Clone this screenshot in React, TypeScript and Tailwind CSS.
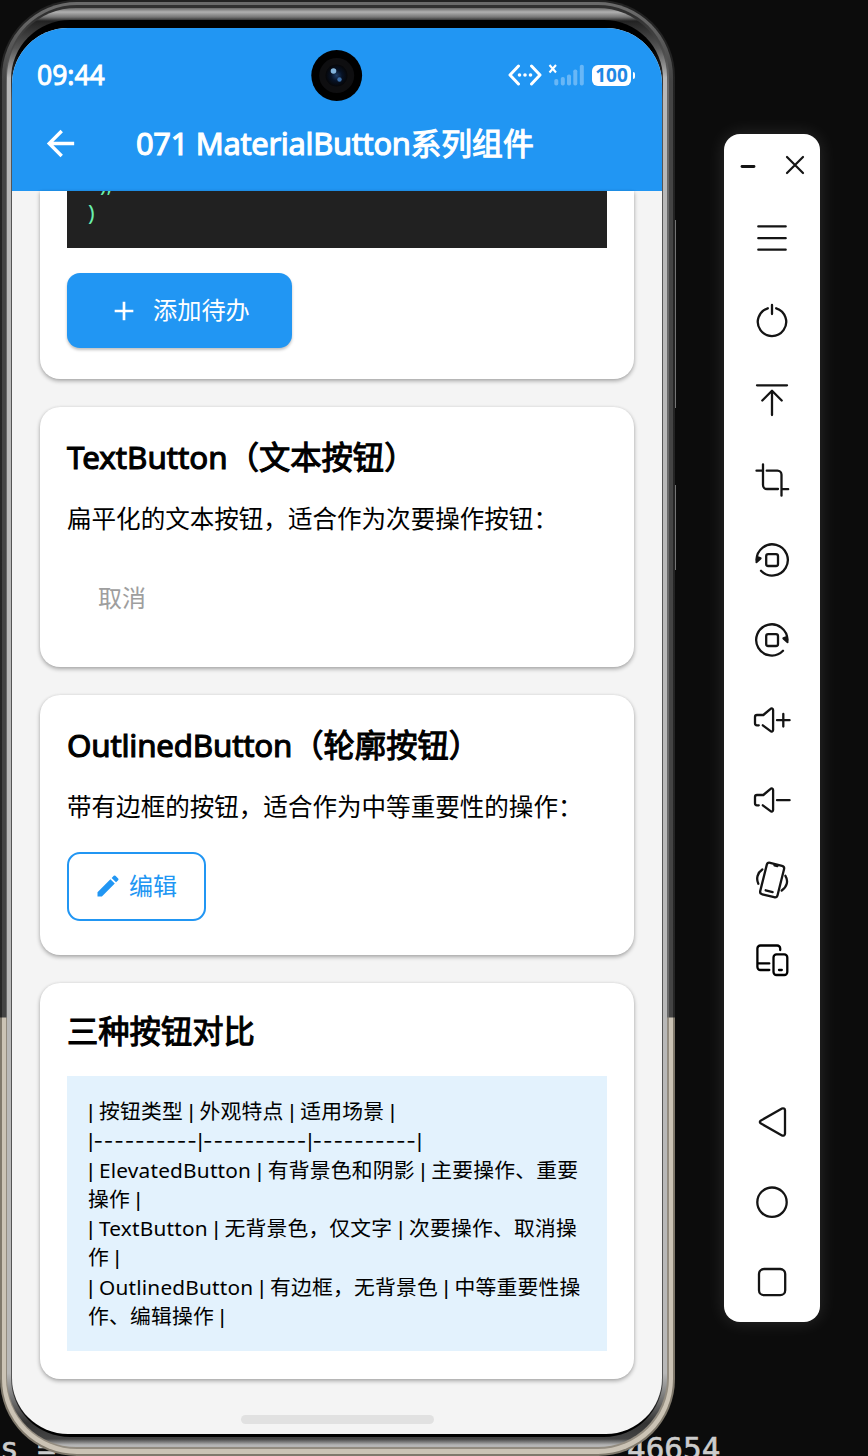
import type { ReactNode } from 'react'
import { MdAdd, MdArrowBack, MdEdit } from 'react-icons/md'

interface CardProps {
  title: ReactNode
  className?: string
  children: ReactNode
}

const Card = ({ title, className = '', children }: CardProps) => (
  <section
    className={`shrink-0 rounded-[20px] bg-white px-[27px] shadow-[0_2px_4px_rgba(0,0,0,0.32),0_0_3px_rgba(0,0,0,0.06)] ${className}`}
  >
    <h2 className="whitespace-nowrap text-[31.3px] leading-[50px] text-black [-webkit-text-stroke:1.1px_black]">
      {title}
    </h2>
    {children}
  </section>
)

const Icon = ({ children }: { children: ReactNode }) => (
  <button className="flex h-20 w-full items-center justify-center">
    <svg
      width="48"
      height="48"
      viewBox="0 0 48 48"
      fill="none"
      stroke="#141414"
      strokeWidth="2.3"
      strokeLinecap="round"
      strokeLinejoin="round"
    >
      {children}
    </svg>
  </button>
)

const speaker =
  'M10.8 29.3H9a2 2 0 0 1-2-2V21a2 2 0 0 1 2-2h6.3l7.3-6.2a1.5 1.5 0 0 1 2.5 1.1v20.2a1.5 1.5 0 0 1-2.5 1.1l-7.8-5.9'

const tableLines = [
  '| 按钮类型 | 外观特点 | 适用场景 |',
  '|----------|----------|----------|',
  '| ElevatedButton | 有背景色和阴影 | 主要操作、重要',
  '操作 |',
  '| TextButton | 无背景色，仅文字 | 次要操作、取消操',
  '作 |',
  '| OutlinedButton | 有边框，无背景色 | 中等重要性操',
  '作、编辑操作 |',
]

const TableLine = ({ line }: { line: string }) => (
  <div className="h-[29.3px]">
    {line.split(/(\||-+)/).map((part, index) => {
      if (part === '|') {
        return (
          <span key={index} className="font-['Liberation_Sans',sans-serif] tracking-normal">
            |
          </span>
        )
      }
      if (part.startsWith('-')) {
        return (
          <span key={index} className="font-['Inter',sans-serif] tracking-[0.85px]">
            {part}
          </span>
        )
      }
      return part
    })}
  </div>
)

const StatusBar = () => (
  <div className="relative flex h-[94px] items-center justify-between pl-[25px] pr-[27px]">
    <span className="text-[26.5px] leading-[30px] [-webkit-text-stroke:0.9px_white]">09:44</span>
    {/* Front camera */}
    <svg className="absolute left-[299px] top-[22px]" width="52" height="52" viewBox="0 0 52 52">
      <defs>
        <radialGradient id="lens">
          <stop offset="0" stopColor="#1d3c66" />
          <stop offset="0.5" stopColor="#071225" />
          <stop offset="1" stopColor="#060608" />
        </radialGradient>
      </defs>
      <circle cx="25.7" cy="25.5" r="25.4" fill="#000" />
      <circle cx="25.7" cy="25.5" r="17.5" fill="#0e0e10" />
      <circle cx="25.5" cy="25.5" r="11" fill="url(#lens)" />
      <circle cx="22.5" cy="21" r="2.8" fill="#83b4dc" />
      <circle cx="28.5" cy="29.5" r="2.2" fill="#3c70ab" />
    </svg>
    <div className="flex items-center">
      <svg width="34" height="24" viewBox="0 0 34 24" fill="none" stroke="white" strokeWidth="3" strokeLinecap="round" strokeLinejoin="round">
        <path d="M10.5 3 2 12l8.5 9M23.5 3 32 12l-8.5 9" />
        <g fill="white" stroke="none">
          <circle cx="11.5" cy="12" r="1.8" />
          <circle cx="17" cy="12" r="1.8" />
          <circle cx="22.5" cy="12" r="1.8" />
        </g>
      </svg>
      <svg className="ml-[6px]" width="38" height="24" viewBox="0 0 38 24">
        <path d="m1.5 2 6.5 7.5m0-7.5L1.5 9.5" stroke="white" strokeWidth="2.1" />
        <g fill="white" fillOpacity="0.32">
          <rect x="6.3" y="16" width="4" height="6.5" rx="1.8" />
          <rect x="12.8" y="14" width="4" height="8.5" rx="1.8" />
          <rect x="19" y="11.5" width="4" height="11" rx="1.8" />
          <rect x="25.3" y="6.5" width="4" height="16" rx="1.8" />
          <rect x="31.8" y="1.8" width="4" height="20.7" rx="1.8" />
        </g>
      </svg>
      <div className="ml-[6px] flex h-[21px] w-[39px] items-center justify-center rounded-[6px] bg-white text-[19px] font-bold leading-none text-[#1e88e5]">
        100
      </div>
      <div className="ml-[1.5px] h-[7px] w-[2.5px] rounded-r bg-white" />
    </div>
  </div>
)

const Screen = () => (
  <div className="flex h-[1406px] w-[650px] flex-col overflow-hidden rounded-[56px] bg-[#f4f4f4]">
    <header className="h-[163px] shrink-0 bg-[#2196f3] text-white">
      <StatusBar />
      <div className="flex h-[42px] items-center">
        <MdArrowBack className="ml-[28px] size-[41px]" />
        <h1 className="ml-[55px] whitespace-nowrap text-[30.8px] leading-[42px] [-webkit-text-stroke:1.1px_white]">
          <span className="tracking-[-0.27px]">071 MaterialButton</span>系列组件
        </h1>
      </div>
    </header>

    <main className="flex min-h-0 flex-1 flex-col px-7">
      <section className="h-[188px] shrink-0 rounded-b-[20px] bg-white px-[27px] shadow-[0_2px_4px_rgba(0,0,0,0.32),0_0_3px_rgba(0,0,0,0.06)]">
        <pre className="flex h-[57px] flex-col justify-end overflow-hidden bg-[#212121] pb-[21px] pl-[21px] text-[22px] leading-[29px] text-[#69f0ae]">
          <code className="pl-3 font-['Noto_Sans',sans-serif]">),</code>
          <code className="font-['Noto_Sans',sans-serif]">)</code>
        </pre>
        <button className="mt-[25px] flex h-[75px] w-[225px] items-center rounded-[13px] bg-[#2196f3] pl-[41px] text-white shadow-[0_2px_3px_rgba(0,0,0,0.25)]">
          <MdAdd className="size-[32px]" />
          <span className="ml-[13px] text-[24.2px]">添加待办</span>
        </button>
      </section>

      <Card title="TextButton（文本按钮）" className="mt-7 h-[260px] pt-[25px]">
        <p className="mt-[22px] whitespace-nowrap text-[24.55px] leading-[30px]">
          扁平化的文本按钮，适合作为次要操作按钮：
        </p>
        <button className="mt-[26px] h-[76px] pl-[31px] text-[24px] text-[#9e9e9e]">取消</button>
      </Card>

      <Card
        title={
          <>
            <span className="tracking-[-0.2px]">OutlinedButton</span>（轮廓按钮）
          </>
        }
        className="mt-7 h-[260px] pt-[25px]"
      >
        <p className="mt-[22px] whitespace-nowrap text-[24.55px] leading-[30px]">
          带有边框的按钮，适合作为中等重要性的操作：
        </p>
        <button className="mt-[30px] flex h-[69px] w-[139px] items-center rounded-[13px] border-2 border-[#2196f3] pb-px pl-[25px] text-[24px] text-[#2196f3]">
          <MdEdit className="mr-[7px] size-[28px]" />
          编辑
        </button>
      </Card>

      <Card title="三种按钮对比" className="mt-7 h-[396px] pt-[23px]">
        <div className="mt-[20px] h-[275px] whitespace-nowrap bg-[#e3f2fd] py-[21px] pl-[21px] text-[20.8px] leading-[29.3px] tracking-[0.2px]">
          {tableLines.map((line, index) => (
            <TableLine key={index} line={line} />
          ))}
        </div>
      </Card>

      <div className="mx-auto mt-9 h-[9px] w-[193px] shrink-0 rounded-full bg-[#e1e1e1]" />
    </main>
  </div>
)

// Metal frame, built as nested rings from the outside in
const Phone = () => (
  <div className="relative h-[1456px] w-[675px] shrink-0">
    <span className="absolute -right-px top-[220px] h-[188px] w-[2px] bg-[#747474]" />
    <span className="absolute -right-px top-[485px] h-[85px] w-[2px] bg-[#747474]" />
    <div className="relative h-full rounded-[77px] bg-[linear-gradient(#222_0,#262626_1017px,#80796c_1018px)] px-[2px] pb-[2px] pt-[2px]">
      <div className="h-full rounded-[75px] bg-[linear-gradient(#6a6a6a_0,#6a6a6a_8px,#444_80px,#444_1015px,#cbc3b5_1016px)] pb-[5px] pl-[4px] pr-[4px] pt-[3px]">
        <div className="h-full rounded-[71px] bg-[linear-gradient(#303030_0,#303030_10px,#686868_80px,#686868_1012px,#938c80_1013px)] pb-[2px] pl-[1px] pr-[2px] pt-[3px]">
          <div className="h-full rounded-[69px] bg-[linear-gradient(#686868_0,#b0b0b0_4px,#777_9px,#222_13px,#555_40px,#b8b8b8_70px,#b8b8b8_1365px,#333_1415px,#444_1431px,#b5b5b5_1437px)] px-[4px] pb-[10px] pt-[12px]">
            <div className="h-full rounded-[59px] bg-[linear-gradient(#000_0,#000_30px,#555_80px,#555_1360px,#000_1400px)] px-px pb-[3px] pt-[8px]">
              <Screen />
            </div>
          </div>
        </div>
      </div>
    </div>
  </div>
)

const Toolbar = () => (
  <aside className="ml-[49px] mt-[134px] flex h-[1188px] w-24 shrink-0 flex-col rounded-2xl bg-white shadow-[0_0_18px_rgba(255,255,255,0.13)]">
    <div className="h-[66px] shrink-0">
      <svg width="96" height="62" viewBox="0 0 96 62" fill="none" stroke="#141414" strokeLinecap="round">
        <path d="M18 32.5h12" strokeWidth="2.8" />
        <path d="m63 23 16 16m0-16L63 39" strokeWidth="2.2" />
      </svg>
    </div>
    <Icon>
      <path d="M10.3 10.4h27.4M10.3 22.2h27.4M10.3 33.7h27.4" />
    </Icon>
    <Icon>
      <path d="M24 9v9M19.8 12.3a14.2 14.2 0 1 0 8.4 0" />
    </Icon>
    <Icon>
      <path d="M9 9.3h30M24 39V15M14.3 24.5l9.7-9.7 9.7 9.7" />
    </Icon>
    <Icon>
      <path d="M15 8.3V29a4 4 0 0 0 4 4h11M18.7 14.7h10.8a4 4 0 0 1 4 4v21M8.5 14.7h6M33.5 33.2h6.7" />
    </Icon>
    <Icon>
      <path d="M13 34.8A15.6 15.6 0 1 0 8.6 24" />
      <path d="m8.6 26 3.9-3.6-3.4-1.4Z" fill="#141414" />
      <rect x="18.2" y="18.2" width="11.8" height="11.8" rx="2" />
    </Icon>
    <Icon>
      <path d="M35 34.8A15.6 15.6 0 1 1 39.4 24" />
      <path d="m39.4 26-3.9-3.6 3.4-1.4Z" fill="#141414" />
      <rect x="18.2" y="18.2" width="11.8" height="11.8" rx="2" />
    </Icon>
    <Icon>
      <path d={speaker} />
      <path d="M29 24.2h12.6M35.3 18v12.6" />
    </Icon>
    <Icon>
      <path d={speaker} />
      <path d="M29 24.2h12.6" />
    </Icon>
    <Icon>
      <g transform="rotate(14 24 24.2)">
        <rect x="15.2" y="7.8" width="17.8" height="32.4" rx="2.8" />
        <path d="M22.8 9.2h3M20.3 35.5h7.2" />
      </g>
      <path d="M14.3 13.5c-4.8 3.2-6.4 9-4 14.3M37.4 19.8c3.2 5.2 1.6 11-3.7 14.7" />
    </Icon>
    <Icon>
      <path d="M32.2 14v-1.5a3 3 0 0 0-3-3H12.4a3 3 0 0 0-3 3V31a3 3 0 0 0 3 3h8.9M9.5 27.4h11.8" stroke="#000" />
      <rect x="25.5" y="18.4" width="13.8" height="20.6" rx="3" stroke="#000" />
      <path d="M31 34h2.8" stroke="#000" />
    </Icon>
    <div className="flex-1" />
    <Icon>
      <path d="M12.6 22.7 34 10.6a2 2 0 0 1 3 1.7v23.4a2 2 0 0 1-3 1.7L12.6 25.3a1.5 1.5 0 0 1 0-2.6Z" />
    </Icon>
    <Icon>
      <circle cx="24" cy="24.2" r="14.7" />
    </Icon>
    <Icon>
      <rect x="11" y="11" width="26.2" height="26.2" rx="5" />
    </Icon>
  </aside>
)

const App = () => (
  <div className="relative flex h-[1456px] w-[868px] items-start overflow-hidden bg-[#0c0c0c] font-['Noto_Sans','Noto_Sans_CJK_SC',sans-serif] text-black">
    {/* Terminal output showing behind the phone */}
    <div className="absolute inset-x-0 top-[1429px] flex whitespace-pre font-['DejaVu_Sans_Mono',monospace] text-[31px] leading-[38px] text-[#cccccc] [-webkit-text-stroke:0.6px_#cccccc]">
      <span className="w-[627px]">s =</span>
      <span>46654</span>
    </div>
    <Phone />
    <Toolbar />
  </div>
)

export default App
